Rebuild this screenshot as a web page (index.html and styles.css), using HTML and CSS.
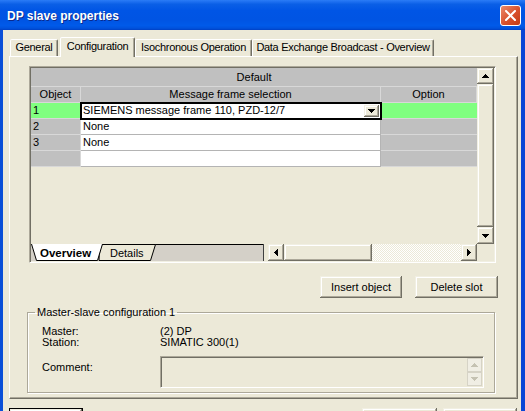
FILE: index.html
```html
<!DOCTYPE html>
<html lang="en">

<head>
  <meta charset="UTF-8" />
  <meta name="viewport" content="width=device-width, initial-scale=1.0" />
  <title>DP slave properties</title>
  <link rel="stylesheet" href="styles.css">
</head>

<body>
  <div class="titlebar">
    <span class="title">DP slave properties</span>
    <span class="close">
      <svg width="11" height="11" viewBox="0 0 11 11"><path d="M1 1 L10 10 M10 1 L1 10" stroke="#fff" stroke-width="2" stroke-linecap="round" /></svg>
    </span>
  </div>

  <div class="frame">
    <div class="tabs">
      <div class="tab w-general">General</div>
      <div class="tab active w-config">Configuration</div>
      <div class="tab w-iso">Isochronous Operation</div>
      <div class="tab w-dx">Data Exchange Broadcast - Overview</div>
    </div>

    <div class="panel">
      <!-- slot table -->
      <div class="grid-frame">
        <div class="grid-main">
          <div class="grid-area">
            <table class="grid">
              <colgroup>
                <col class="c-obj">
                <col class="c-msg">
                <col class="c-opt">
              </colgroup>
              <tr class="hd1"><th colspan="3">Default</th></tr>
              <tr class="hd2"><th>Object</th><th>Message frame selection</th><th>Option</th></tr>
              <tr class="sel">
                <td class="obj">1</td>
                <td class="msg edit"><span class="drop raised"><svg width="7" height="4" viewBox="0 0 7 4"><path d="M0 0h7v1h-1v1h-1v1h-1v1h-1V3h-1V2h-1V1H0z" /></svg></span>SIEMENS message frame 110, PZD-12/7</td>
                <td class="opt"></td>
              </tr>
              <tr><td class="obj">2</td><td class="msg">None</td><td class="opt"></td></tr>
              <tr><td class="obj">3</td><td class="msg">None</td><td class="opt"></td></tr>
              <tr><td class="obj">&nbsp;</td><td class="msg"></td><td class="opt"></td></tr>
            </table>
          </div>
          <div class="vscroll">
            <div class="sb-btn raised"><svg width="7" height="4" viewBox="0 0 7 4"><path d="M3 0h1v1h1v1h1v1h1v1H0V3h1V2h1V1h1z" /></svg></div>
            <div class="sb-thumb raised"></div>
            <div class="sb-btn down raised"><svg width="7" height="4" viewBox="0 0 7 4"><path d="M0 0h7v1h-1v1h-1v1h-1v1h-1V3h-1V2h-1V1H0z" /></svg></div>
          </div>
        </div>
        <div class="grid-bottom">
          <svg class="sheets" width="232" height="17" viewBox="0 0 232 17">
            <rect x="0" y="0" width="232" height="17" fill="#d4d0c8" />
            <line x1="66" y1="0.5" x2="232" y2="0.5" stroke="#000" />
            <path d="M71 0.5 L124.5 0.5 L119.5 16.5 L68 16.5 Q68 6 71 0.5 Z" fill="#ece9d8" stroke="#000" />
            <path d="M0.5 0 L5.5 16.5 L66.5 16.5 L71.5 0" fill="#fff" stroke="#000" />
            <text x="9" y="13" class="sheet-on">Overview</text>
            <text x="79" y="13">Details</text>
          </svg>
          <div class="splitter"></div>
          <div class="hscroll">
            <div class="sb-btn h raised"><svg width="4" height="7" viewBox="0 0 4 7"><path d="M3 0h1v7h-1v-1h-1v-1h-1v-1H0V3h1V2h1V1h1z" /></svg></div>
            <div class="sb-thumb h raised"></div>
            <div class="sb-track"></div>
            <div class="sb-btn h raised"><svg width="4" height="7" viewBox="0 0 4 7"><path d="M0 0h1v1h1v1h1v1h1v1h-1v1h-1v1h-1v1H0z" /></svg></div>
          </div>
          <div class="corner"></div>
        </div>
      </div>

      <div class="actions">
        <div class="btn raised w-insert">Insert object</div>
        <div class="btn raised w-delete">Delete slot</div>
      </div>

      <fieldset class="group">
        <legend>Master-slave configuration 1</legend>
        <div class="group-body">
          <span>Master:</span><span>(2) DP</span>
          <span>Station:</span><span>SIMATIC 300(1)</span>
          <span class="lbl-comment">Comment:</span>
          <div class="comment">
            <div class="spin">
              <div class="spin-btn"><svg width="7" height="4" viewBox="0 0 7 4"><path d="M3 0h1v1h1v1h1v1h1v1H0V3h1V2h1V1h1z" /></svg></div>
              <div class="spin-btn"><svg width="7" height="4" viewBox="0 0 7 4"><path d="M0 0h7v1h-1v1h-1v1h-1v1h-1V3h-1V2h-1V1H0z" /></svg></div>
            </div>
          </div>
        </div>
      </fieldset>
    </div>

    <!-- dialog buttons, only their top edge is in view -->
    <div class="footer">
      <div class="btn raised default"></div>
      <div class="footer-right">
        <div class="btn raised w-foot"></div>
        <div class="btn raised w-foot2"></div>
      </div>
    </div>
  </div>
</body>

</html>
```

FILE: styles.css
```css
* {
  margin: 0;
  padding: 0;
  box-sizing: border-box;
}

body {
  width: 525px;
  height: 411px;
  overflow: hidden;
  font: 11px "Liberation Sans", Arial, sans-serif;
  color: #000;
  background: #ece9d8;
}

/* title bar */
.titlebar {
  height: 30px;
  display: flex;
  align-items: center;
  justify-content: space-between;
  padding: 0 4px 0 7px;
  background: linear-gradient(#2a7cf6 0%, #1d6ff0 6%, #0a5fe6 14%, #0055e5 35%, #0054e3 65%, #005ae9 85%, #0052dd 94%, #0040c4 100%);
}

.title {
  padding-top: 2px;
  font-size: 12px;
  font-weight: bold;
  color: #fff;
  text-shadow: 1px 1px #0a2a8c;
}

.close {
  width: 21px;
  height: 21px;
  display: flex;
  align-items: center;
  justify-content: center;
  border: 1px solid #fff;
  border-radius: 3px;
  background: linear-gradient(135deg, #eb8a6c, #d8502c 55%, #c23b14);
}

/* window body */
.frame {
  height: 381px;
  border-left: 3px solid #0a4fd8;
  border-right: 4px solid #0a45d6;
  padding: 7px 4px 0 6px;
}

.tabs {
  display: flex;
  align-items: flex-start;
  height: 20px;
  margin-left: 1px;
  position: relative;
  z-index: 1;
}

.tab {
  height: 17px;
  margin-top: 2px;
  border: 1px solid;
  border-bottom: none;
  border-color: #fff #716f64 transparent #fff;
  border-radius: 2px 2px 0 0;
  box-shadow: inset -1px 0 #aca899;
  background: #ece9d8;
  text-align: center;
  line-height: 15px;
  letter-spacing: -0.3px;
  white-space: nowrap;
}

.tab.active {
  height: 20px;
  margin-top: 0;
  line-height: 17px;
}

.w-general { width: 48px; }
.w-config { width: 75px; margin-left: 2px; }
.w-iso { width: 117px; }
.w-dx { width: 182px; }

.panel {
  width: 509px;
  height: 343px;
  margin-top: -1px;
  border: 1px solid;
  border-color: #fff #716f64 #716f64 #fff;
  box-shadow: inset -1px -1px #aca899;
  padding: 9px 19px 0 19px;
}

/* 3d helpers */
.raised {
  background: #ece9d8;
  box-shadow: inset -1px -1px #716f64, inset 1px 1px #f1efe2, inset -2px -2px #aca899, inset 2px 2px #fff;
}

/* slot grid */
.grid-frame {
  width: 467px;
  height: 197px;
  border: 1px solid;
  border-color: #aca899 #fff #fff #aca899;
  box-shadow: inset 1px 1px #716f64, inset -1px -1px #f1efe2;
  padding: 1px;
}

.grid-main {
  display: flex;
  height: 176px;
}

.grid-area {
  flex: 1;
  background: #ece9d8;
}

.grid {
  width: 446px;
  table-layout: fixed;
  border-collapse: separate;
  border-spacing: 0;
}

.c-obj { width: 50px; }
.c-msg { width: 300px; }
.c-opt { width: 96px; }

.grid th,
.grid td {
  padding: 0 0 0 2px;
  line-height: 15px;
  border-right: 1px solid #d8d8d8;
  border-bottom: 1px solid #d8d8d8;
  white-space: nowrap;
  text-align: left;
  font-weight: normal;
}

.grid th {
  background: #c0c0c0;
  text-align: center;
  padding: 0;
}

.grid .hd1 th {
  line-height: 18px;
  border-right: none;
}

.grid td.obj,
.grid td.opt {
  background: #c0c0c0;
}

.grid td.opt {
  border-right: none;
}

.grid td.msg {
  background: #fff;
  border-color: #b4b4b4;
}

.grid tr.sel td.obj,
.grid tr.sel td.opt {
  background: #80ff80;
}

.grid td.edit {
  outline: 2px solid #000;
  outline-offset: -1px;
}

.drop {
  float: right;
  width: 15px;
  height: 12px;
  margin: 2px 1px 0 0;
  display: flex;
  align-items: center;
  justify-content: center;
}

.vscroll {
  width: 17px;
  display: flex;
  flex-direction: column;
}

.sb-btn {
  width: 17px;
  height: 16px;
  display: flex;
  align-items: center;
  justify-content: center;
}

.sb-btn.down {
  height: 17px;
}

.sb-btn.h {
  width: 16px;
  height: 17px;
}

.sb-thumb {
  flex: 1;
}

.sb-thumb.h {
  flex: none;
  width: 88px;
}

.grid-bottom {
  display: flex;
  height: 17px;
}

.sheets {
  display: block;
  flex: none;
}

.sheets text {
  font-size: 11px;
}

.sheets .sheet-on {
  font-size: 11.5px;
  font-weight: bold;
}

.splitter {
  width: 5px;
  border-left: 1px solid #404040;
  background: #ece9d8;
}

.hscroll {
  width: 209px;
  display: flex;
}

.sb-track {
  flex: 1;
  background: repeating-conic-gradient(#fff 0 25%, #ece9d8 0 50%) 0 0 / 2px 2px;
}

.corner {
  flex: 1;
  background: #ece9d8;
}

/* buttons under grid */
.actions {
  display: flex;
  justify-content: flex-end;
  gap: 13px;
  margin-top: 13px;
}

.btn {
  height: 22px;
  line-height: 22px;
  text-align: center;
}

.w-insert { width: 82px; }
.w-delete { width: 83px; }

/* group box */
.group {
  width: 468px;
  margin: 8px 0 0 -2px;
  border: 1px solid #aca899;
  box-shadow: inset 1px 1px #fff, 1px 1px #fff;
  padding: 0;
}

.group legend {
  margin-left: 7px;
  padding: 0 2px;
  line-height: 13px;
}

.group-body {
  display: grid;
  grid-template-columns: 118px 1fr;
  padding: 7px 10px 4px 14px;
  line-height: 11px;
}

.lbl-comment {
  margin-top: 8px;
  padding-top: 6px;
}

.comment {
  height: 32px;
  margin-top: 8px;
  border: 1px solid;
  border-color: #aca899 #fff #fff #aca899;
  box-shadow: inset 1px 1px #716f64;
  display: flex;
  justify-content: flex-end;
  padding: 1px 1px 0 0;
}

.spin {
  width: 15px;
  display: flex;
  flex-direction: column;
}

.spin-btn {
  height: 14px;
  display: flex;
  align-items: center;
  justify-content: center;
  border: 1px solid #d6d3c6;
  background: #f0eee4;
}

.spin-btn svg {
  fill: #c5c2b2;
}

/* dialog buttons (cut off at the bottom) */
.footer {
  display: flex;
  justify-content: space-between;
  margin-top: 9px;
}

.footer-right {
  display: flex;
  gap: 6px;
}

.btn.default {
  width: 74px;
  height: 23px;
  border: 1px solid #000;
}

.w-foot { width: 75px; height: 23px; }
.w-foot2 { width: 74px; height: 23px; }
```
